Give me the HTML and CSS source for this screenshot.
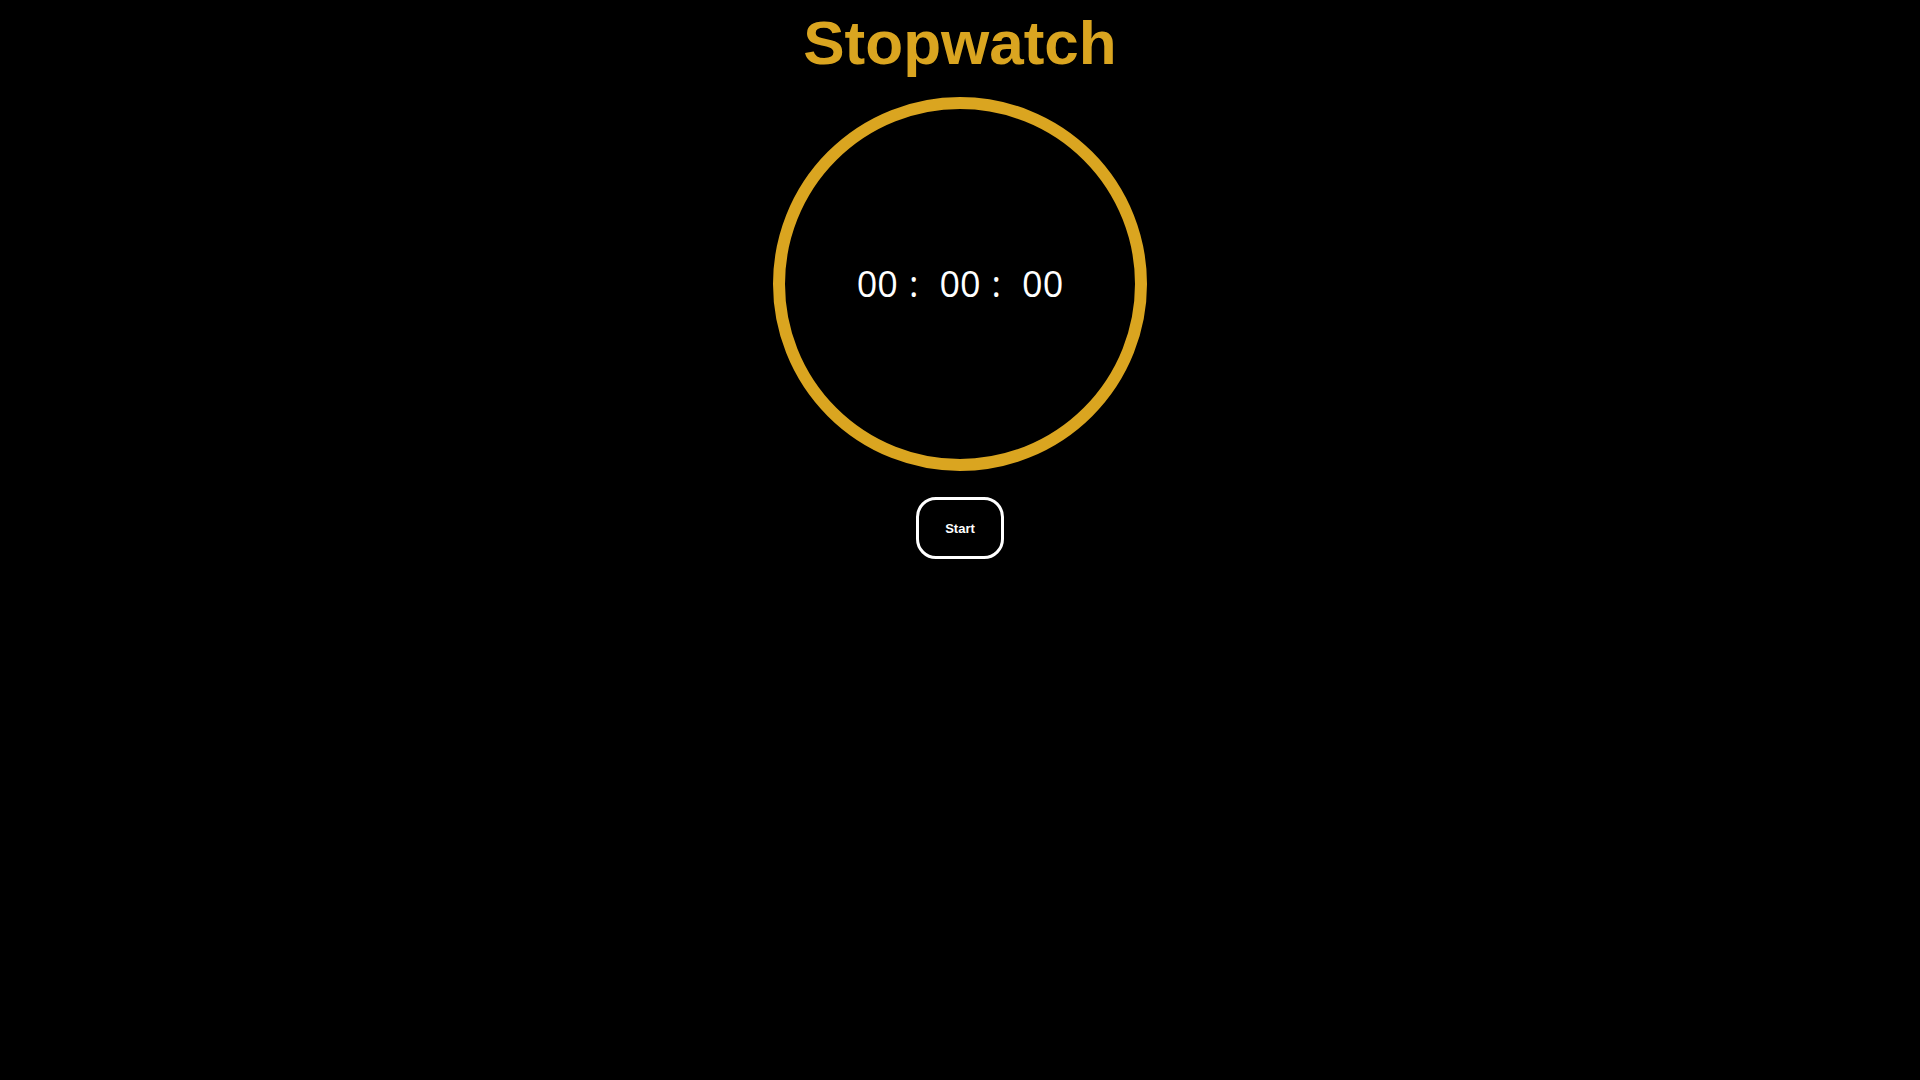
FILE: index.html
```html
<!DOCTYPE html>
<html lang="en">
<head>
<meta charset="utf-8">
<title>Stopwatch</title>
<link rel="stylesheet" href="styles.css">
</head>
<body>
<main class="app">
  <h1 class="title">Stopwatch</h1>
  <div class="dial">
    <div class="time">
      <span class="seg">00</span><span class="sep">:</span><span class="seg">00</span><span class="sep">:</span><span class="seg">00</span>
    </div>
  </div>
  <button class="btn" type="button">Start</button>
</main>
</body>
</html>
```
FILE: styles.css
```css
html, body {
  margin: 0;
  padding: 0;
  background: #000;
}
body {
  min-height: 100vh;
}
.app {
  display: flex;
  flex-direction: column;
  align-items: center;
}
.title {
  margin: 7px 0 0;
  font-family: "Liberation Sans", Arial, sans-serif;
  font-weight: bold;
  font-size: 62px;
  line-height: 72px;
  color: #daa520;
}
.dial {
  margin-top: 18px;
  width: 350px;
  height: 350px;
  border: 12px solid #daa520;
  border-radius: 50%;
  display: flex;
  align-items: center;
  justify-content: center;
}
.time {
  display: flex;
  align-items: baseline;
  font-family: "Open Sans", "Noto Sans", sans-serif;
  font-size: 36px;
  line-height: 1;
  color: #fff;
}
.sep {
  margin: 0 21px 0 11px;
}
.btn {
  margin-top: 26px;
  width: 88px;
  height: 62px;
  box-sizing: border-box;
  border: 3px solid #fff;
  border-radius: 20px;
  background: #000;
  color: #fff;
  font-family: "Liberation Sans", Arial, sans-serif;
  font-weight: bold;
  font-size: 13px;
  padding: 0;
  cursor: pointer;
}
```
